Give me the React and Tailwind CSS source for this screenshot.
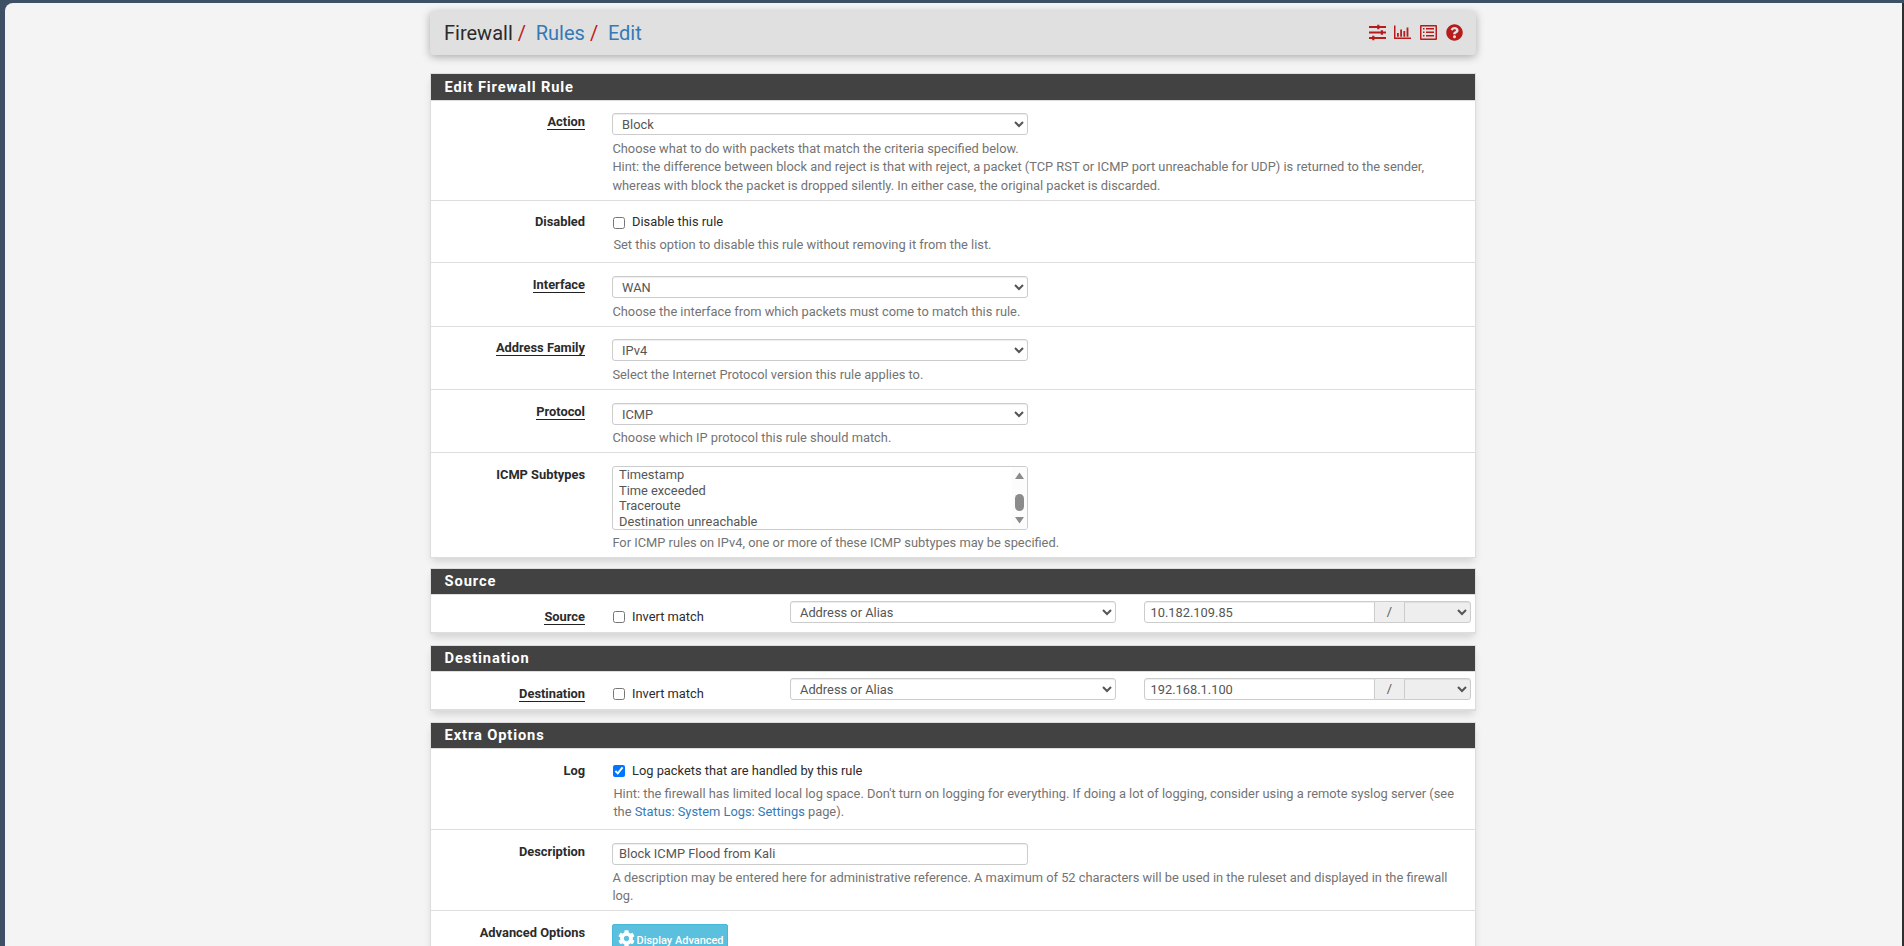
import { FaCog, FaQuestionCircle } from 'react-icons/fa'

const INPUT = 'h-[22px] rounded-[3px] border border-[#ccc] bg-white text-[#555] shadow-[inset_0_1px_1px_rgba(0,0,0,0.075)]'

export default function App() {
  return (
    <div className="h-[946px] w-full overflow-hidden bg-[#3e5064] pt-[3px] pl-[5px]">
      <div className="h-full overflow-hidden rounded-tl-lg border-r-2 border-[#2f2f2f] bg-[#f4f4f4] pt-[8px] pl-[425px] font-[Roboto,sans-serif] text-[12.85px] leading-[18.33px] text-[#2b2b2b]">
        <div className="w-[1046px]">

          {/* Breadcrumb */}
          <header className="flex h-[44px] items-center justify-between rounded-[4px] bg-[#e0e0e0] pr-[13px] pl-[14px] shadow-[0_2px_8px_rgba(0,0,0,0.3)]">
            <div className="flex text-[20px] leading-[22px]">
              <span>Firewall</span>
              <span className="w-[23px] pl-[5px] text-[#c01818]">/</span>
              <a className="text-[#337ab7]">Rules</a>
              <span className="w-[23px] pl-[5px] text-[#c01818]">/</span>
              <a className="text-[#337ab7]">Edit</a>
            </div>
            <div className="flex items-center gap-[9px] pb-px text-[#b71c1c]">
              <SlidersIcon />
              <ChartIcon />
              <ListIcon />
              <FaQuestionCircle size={17} />
            </div>
          </header>

          <Panel title="Edit Firewall Rule" className="mt-[18px] h-[485px]" heading="h-[25px] pt-px">
            <Row label="Action" linked className="h-[100px] pt-[12px]">
              <Select value="Block" />
              <Help className="mt-[5px]">
                Choose what to do with packets that match the criteria specified below.<br />
                Hint: the difference between block and reject is that with reject, a packet (TCP RST or ICMP port unreachable for UDP) is returned to the sender, whereas with block the packet is dropped silently. In either case, the original packet is discarded.
              </Help>
            </Row>
            <Row label="Disabled" className="h-[62px] pt-[12px]">
              <Check label="Disable this rule" box="mt-[2px]" />
              <Help className="mt-[5px] pl-px">Set this option to disable this rule without removing it from the list.</Help>
            </Row>
            <Row label="Interface" linked className="h-[64px] pt-[13px]">
              <Select value="WAN" />
              <Help className="mt-[5px]">Choose the interface from which packets must come to match this rule.</Help>
            </Row>
            <Row label="Address Family" linked className="h-[63px] pt-[12px]">
              <Select value="IPv4" />
              <Help className="mt-[5px]">Select the Internet Protocol version this rule applies to.</Help>
            </Row>
            <Row label="Protocol" linked className="h-[63px] pt-[13px]">
              <Select value="ICMP" />
              <Help className="mt-[4px]">Choose which IP protocol this rule should match.</Help>
            </Row>
            <Row label="ICMP Subtypes" className="h-[104px] border-b-0 pt-[13px]">
              <ListBox items={['Timestamp', 'Time exceeded', 'Traceroute', 'Destination unreachable']} />
              <Help className="mt-[4px]">For ICMP rules on IPv4, one or more of these ICMP subtypes may be specified.</Help>
            </Row>
          </Panel>

          <Panel title="Source" className="mt-[10px] h-[66px]">
            <AddressRow label="Source" address="10.182.109.85" />
          </Panel>

          <Panel title="Destination" className="mt-[11px] h-[66px]">
            <AddressRow label="Destination" address="192.168.1.100" />
          </Panel>

          <Panel title="Extra Options" className="mt-[11px] h-[260px]">
            <Row label="Log" className="h-[81px] pt-[13px]">
              <Check label="Log packets that are handled by this rule" checked />
              <Help className="mt-[4.4px] pl-px">
                Hint: the firewall has limited local log space. Don't turn on logging for everything. If doing a lot of logging, consider using a remote syslog server (see the <a className="text-[#337ab7]">Status: System Logs: Settings</a> page).
              </Help>
            </Row>
            <Row label="Description" className="h-[81px] pt-[13px]">
              <input readOnly value="Block ICMP Flood from Kali" className={`${INPUT} block w-[416px] px-[6px] pb-px`} />
              <Help className="mt-[4px]">
                A description may be entered here for administrative reference. A maximum of 52 characters will be used in the ruleset and displayed in the firewall log.
              </Help>
            </Row>
            <Row label="Advanced Options" className="h-[81px] pt-[13px]">
              <button className="flex h-[28px] w-[116px] items-center rounded-[2px] border border-[#46b8da] bg-[#5bc0de] pl-[4.5px] text-[11px] text-white">
                <FaCog size={17} className="mr-[2px] shrink-0" />
                <span className="pt-[7px] font-medium tracking-[-0.02px] whitespace-nowrap">Display Advanced</span>
              </button>
            </Row>
          </Panel>
        </div>
      </div>
    </div>
  )
}

function Panel({ title, className, heading = 'h-[25px]', children }) {
  return (
    <section className={`${className} w-[1046px] border border-[#ddd] bg-white shadow-[0_5px_8px_-2px_rgba(0,0,0,0.15)]`}>
      <h2 className={`${heading} box-content border-b border-[#ddd] bg-[#424242] pl-[13.6px] text-[14.67px] leading-[25px] font-bold tracking-[0.89px] text-white`}>
        {title}
      </h2>
      {children}
    </section>
  )
}

function Label({ children, linked }) {
  return (
    <div className="w-[154px] shrink-0 text-right font-bold">
      <span className={linked ? 'inline-block border-b border-[#212121] leading-[15px]' : ''}>{children}</span>
    </div>
  )
}

function Row({ label, linked, className, children }) {
  return (
    <div className={`${className} flex border-b border-[#ddd]`}>
      <Label linked={linked}>{label}</Label>
      <div className="ml-[27px] w-[850px]">{children}</div>
    </div>
  )
}

function AddressRow({ label, address }) {
  return (
    <div className="flex h-[38px] border-b border-[#ddd] pt-[6px]">
      <div className="flex pt-[7px]">
        <Label linked>{label}</Label>
        <div className="ml-[27px] w-[178px]"><Check label="Invert match" /></div>
      </div>
      <Select value="Address or Alias" className="w-[326px]" />
      <div className="ml-[28px] flex">
        <input readOnly value={address} className={`${INPUT} w-[231px] rounded-r-none px-[5.5px]`} />
        <span className="h-[22px] w-[29px] border-y border-[#ccc] bg-[#eee] text-center leading-[20px] text-[#555]">/</span>
        <Select value="" className="w-[67px] rounded-l-none bg-[#eee]" />
      </div>
    </div>
  )
}

function Select({ value, className = 'w-[416px]' }) {
  return (
    <select className={`block h-[22px] rounded-[3px] border border-[#ccc] px-[5px] text-[#555] shadow-[inset_0_1px_1px_rgba(0,0,0,0.075)] ${className}`}>
      <option>{value}</option>
    </select>
  )
}

function Help({ children, className }) {
  return <p className={`${className} ml-[0.4px] text-[#737373]`}>{children}</p>
}

function Check({ label, checked, box = '' }) {
  return (
    <label className="flex items-center">
      <input type="checkbox" defaultChecked={checked} className={`${box} ml-px size-[12px]`} />
      <span className="ml-[7px]">{label}</span>
    </label>
  )
}

function ListBox({ items }) {
  return (
    <div className="flex h-[64px] w-[416px] justify-between overflow-hidden rounded-[3px] border border-[#ccc] text-[#555]">
      <ul className="pl-[6px] leading-[15.6px]">
        {items.map(item => <li key={item}>{item}</li>)}
      </ul>
      <div className="bg-[#fcfcfc]">
        <svg width="15" height="62" viewBox="0 0 15 62" fill="#8b8b8b">
          <path d="M3 12l4.500-6.500L12 12zM3 50h9l-4.500 6.500z" />
          <rect x="3" y="27" width="9" height="17" rx="4.5" />
        </svg>
      </div>
    </div>
  )
}

function SlidersIcon() {
  return (
    <svg width="17" height="17" viewBox="0 0 17 17" fill="currentColor" className="-mr-px">
      <path d="M0 2h17v2H0zM0 7.500h17v2H0zM0 13h17v2H0z" />
      <path d="M8.200 0.800h2.200v4.400H8.200zM11.800 6.300h2.200v4.400h-2.200zM3.200 11.800h2.200v4.400H3.200z" />
    </svg>
  )
}

function ChartIcon() {
  return (
    <svg width="17" height="17" viewBox="0 0 17 17" fill="currentColor">
      <path d="M0 1.500h1.500v12H17V15H0z" />
      <path d="M3 9h1.800v3.700H3zM6.200 5.500H8v7.200H6.200zM9.400 7h1.800v5.700H9.400zM12.600 3.500h1.800v9.200h-1.800z" />
    </svg>
  )
}

function ListIcon() {
  return (
    <svg width="17" height="17" viewBox="0 0 17 17" fill="currentColor">
      <path fillRule="evenodd" d="M1 1h15a1 1 0 011 1v13a1 1 0 01-1 1H1a1 1 0 01-1-1V2a1 1 0 011-1zm.5 1.500v12h14v-12z" />
      <path d="M3 4h1.500v1.500H3zM3 7.500h1.500V9H3zM3 11h1.500v1.500H3zM6 4h8v1.500H6zM6 7.500h8V9H6zM6 11h8v1.500H6z" />
    </svg>
  )
}
